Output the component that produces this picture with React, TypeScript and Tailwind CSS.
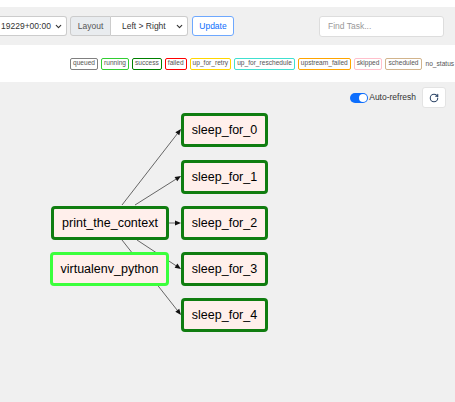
import { RotateCw, ChevronDown } from 'lucide-react'

const legend = [
  { label: 'queued', color: 'border-[#808080]' },
  { label: 'running', color: 'border-[#32cd32]' },
  { label: 'success', color: 'border-[#008000]' },
  { label: 'failed', color: 'border-[#ff0000]' },
  { label: 'up_for_retry', color: 'border-[#ffd700]' },
  { label: 'up_for_reschedule', color: 'border-[#40e0d0]' },
  { label: 'upstream_failed', color: 'border-[#ffa500]' },
  { label: 'skipped', color: 'border-[#ffc0cb]' },
  { label: 'scheduled', color: 'border-[#d2b48c]' },
]

// node boxes in canvas coords (canvas starts at y=82)
const nodes = [
  { id: 'sleep_for_0', x: 181, y: 31, w: 87, running: false },
  { id: 'sleep_for_1', x: 181, y: 78, w: 87, running: false },
  { id: 'sleep_for_2', x: 181, y: 124, w: 87, running: false },
  { id: 'print_the_context', x: 51, y: 124, w: 118, running: false },
  { id: 'virtualenv_python', x: 50, y: 170, w: 119, running: true },
  { id: 'sleep_for_3', x: 181, y: 170, w: 87, running: false },
  { id: 'sleep_for_4', x: 181, y: 216, w: 87, running: false },
]

const edges = [
  { x1: 122, y1: 123, x2: 181, y2: 47 },
  { x1: 135, y1: 123, x2: 181, y2: 94 },
  { x1: 168, y1: 141, x2: 181, y2: 141 },
  { x1: 137, y1: 158, x2: 181, y2: 187 },
  { x1: 122, y1: 158, x2: 181, y2: 233 },
]

function Arrow({ x1, y1, x2, y2 }: { x1: number; y1: number; x2: number; y2: number }) {
  const a = Math.atan2(y2 - y1, x2 - x1)
  const len = 6
  const bx = x2 - len * Math.cos(a)
  const by = y2 - len * Math.sin(a)
  const px = 2.5 * Math.sin(a)
  const py = -2.5 * Math.cos(a)
  return (
    <g>
      <line x1={x1} y1={y1} x2={bx} y2={by} stroke="#666" strokeWidth={1} />
      <polygon points={`${x2},${y2} ${bx + px},${by + py} ${bx - px},${by - py}`} fill="#111" />
    </g>
  )
}

export default function App() {
  return (
    <div className="w-[455px] h-[402px] overflow-hidden bg-white font-['Liberation_Sans',sans-serif] flex flex-col">
      {/* Toolbar */}
      <div className="mt-[7px] h-[38px] bg-[#f0f0f0] flex items-center text-[8.5px]">
        <div className="h-[20px] w-[67px] bg-white border border-[#ccc] rounded-r-[3px] border-l-0 flex items-center justify-between pr-[3px] text-[#333] overflow-hidden">
          <span className="ml-[1px] whitespace-nowrap">19229+00:00</span>
          <ChevronDown size={9} strokeWidth={3} />
        </div>
        <div className="ml-[3px] flex h-[20px]">
          <div className="w-[41px] bg-[#e9ecef] border border-[#ccc] rounded-l-[3px] flex items-center justify-center text-[#555]">
            Layout
          </div>
          <div className="w-[77px] bg-white border border-l-0 border-[#ccc] rounded-r-[3px] flex items-center justify-between pl-[11px] pr-[3px] text-[#333]">
            <span>Left &gt; Right</span>
            <ChevronDown size={9} strokeWidth={3} />
          </div>
        </div>
        <button className="ml-[4px] h-[20px] w-[42px] bg-white border border-[#6ea8fe] rounded-[3px] text-[#0d6efd]">
          Update
        </button>
        <div className="ml-[85px] h-[21px] w-[125px] bg-white border border-[#ddd] rounded-[3px] flex items-center pl-[8px] text-[#999]">
          Find Task...
        </div>
      </div>

      {/* Legend */}
      <div className="h-[37px] bg-white flex items-center pl-[70px] gap-[3px] text-[6.6px] text-[#555]">
        {legend.map((l) => (
          <span
            key={l.label}
            className={`h-[12px] px-[2px] border ${l.color} rounded-[2px] flex items-center leading-none whitespace-nowrap`}
          >
            {l.label}
          </span>
        ))}
        <span className="ml-[1px] whitespace-nowrap">no_status</span>
      </div>

      {/* Canvas */}
      <div className="relative flex-1 bg-[#f0f0f0]">
        <div className="flex justify-end items-center pt-[5px] pr-[9px] gap-[6px]">
          <div className="flex items-center gap-[1px] text-[8.5px] text-[#333]">
            <div className="w-[18px] h-[10px] rounded-full bg-[#0d6efd] flex items-center justify-end pr-[1px]">
              <div className="w-[8px] h-[8px] rounded-full bg-white" />
            </div>
            <span>Auto-refresh</span>
          </div>
          <button className="w-[24px] h-[21px] bg-white border border-[#e3e3e3] rounded-[3px] flex items-center justify-center text-[#2a4365]">
            <RotateCw size={10} strokeWidth={2.5} />
          </button>
        </div>

        <svg className="absolute left-0 top-0" width={455} height={320}>
          {edges.map((e, i) => (
            <Arrow key={i} {...e} />
          ))}
        </svg>

        {nodes.map((n) => (
          <div
            key={n.id}
            className={`absolute h-[34px] bg-[#ffefeb] rounded-[4px] border-[3px] flex items-center justify-center text-[12.5px] text-black ${
              n.running ? 'border-[#3cff3c]' : 'border-[#107d10]'
            }`}
            style={{ left: n.x, top: n.y, width: n.w }}
          >
            {n.id}
          </div>
        ))}
      </div>
    </div>
  )
}
